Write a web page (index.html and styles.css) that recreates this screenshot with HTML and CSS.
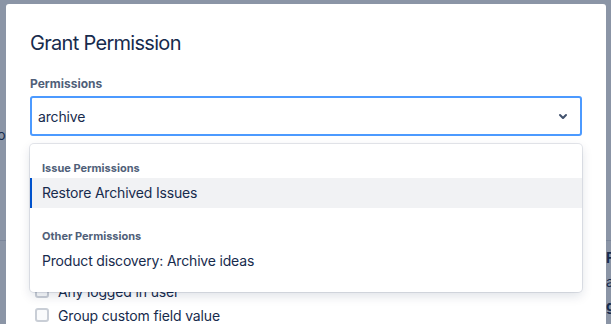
FILE: index.html
```html
<!DOCTYPE html>
<html lang="en">
<head>
    <meta charset="UTF-8">
    <meta name="viewport" content="width=device-width, initial-scale=1.0">
    <title>Grant Permission</title>
    <link rel="stylesheet" href="styles.css">
</head>
<body>
    <!-- page behind the dialog -->
    <div class="page">
        <div class="page-row">
            <span class="page-left">Selector</span>
        </div>
        <hr class="page-rule">
        <div class="page-side">
            <b>Filter</b>
            <span>any</span>
            <b>grant</b>
        </div>
    </div>

    <div class="blanket"></div>

    <div class="modal">
        <h1 class="modal-title">Grant Permission</h1>

        <label class="field-label" for="perm">Permissions</label>
        <div class="select">
            <div class="select-control">
                <input id="perm" class="select-input" type="text" value="archive">
                <span class="select-chevron">
                    <svg width="24" height="24" viewBox="0 0 24 24">
                        <path fill="currentColor" d="M8.292 10.293a1.009 1.009 0 0 0 0 1.419l2.939 2.965c.218.215.5.322.779.322s.556-.107.769-.322l2.93-2.955a1.01 1.01 0 0 0 0-1.419.987.987 0 0 0-1.406 0l-2.298 2.317-2.307-2.327a.99.99 0 0 0-1.406 0z"/>
                    </svg>
                </span>
            </div>

            <div class="menu">
                <div class="menu-group">
                    <div class="menu-heading">Issue Permissions</div>
                    <div class="menu-option is-focused">Restore Archived Issues</div>
                </div>
                <div class="menu-group">
                    <div class="menu-heading">Other Permissions</div>
                    <div class="menu-option">Product discovery: Archive ideas</div>
                </div>
            </div>
        </div>

        <div class="field-label granted">Granted to</div>
        <ul class="grant-list">
            <li><span class="box"></span>Application access</li>
            <li><span class="box"></span>Project lead</li>
            <li><span class="box"></span>Project role</li>
            <li><span class="box"></span>Reporter</li>
            <li><span class="box"></span>Any logged in user</li>
            <li><span class="box"></span>Group custom field value</li>
        </ul>
    </div>
</body>
</html>
```

FILE: styles.css
```css
body {
    margin: 0;
    font-family: Inter, "Noto Sans", sans-serif;
    color: #172b4d;
    background-color: #fff;
    overflow: hidden;
    height: 324px;
}

/* Page behind the blanket */
.page {
    height: 324px;
    font-size: 14px;
}

.page-row {
    padding-top: 126px;
    height: 114px;
    margin-left: -44px;
}

.page-left {
    font-size: 14px;
}

.page-rule {
    margin: 0;
    border: none;
    border-top: 1px solid #dfe1e6;
}

.page-side {
    display: flex;
    flex-direction: column;
    gap: 7px;
    margin-left: 606px;
    padding-top: 8px;
    font-size: 14px;
    line-height: 17px;
}

/* Dialog */
.blanket {
    position: fixed;
    inset: 0;
    background-color: rgba(23, 43, 77, 0.5);
}

.modal {
    position: absolute;
    top: 4px;
    left: 6px;
    width: 600px;
    height: 420px;
    box-sizing: border-box;
    padding: 27px 24px 0;
    background-color: #fff;
    border-radius: 3px;
}

.modal-title {
    margin: 0 0 21px;
    font-size: 20px;
    font-weight: 400;
    line-height: 24px;
    letter-spacing: -0.7px;
    color: #172b4d;
}

.field-label {
    display: block;
    margin-bottom: 4px;
    font-size: 12px;
    font-weight: 700;
    line-height: 16px;
    color: #505f79;
}

.select {
    position: relative;
}

.select-control {
    display: flex;
    align-items: center;
    height: 40px;
    box-sizing: border-box;
    border: 2px solid #4c9aff;
    border-radius: 3px;
    padding: 0 5px 0 6px;
}

.select-input {
    flex: 1;
    border: none;
    outline: none;
    padding: 0;
    font-family: inherit;
    font-size: 14px;
    letter-spacing: -0.15px;
    color: #172b4d;
    background: transparent;
}

.select-chevron {
    display: flex;
    color: #42526e;
}

.menu {
    position: absolute;
    top: calc(100% + 8px);
    left: 0;
    right: 0;
    z-index: 2;
    padding: 4px 0 8px;
    background-color: #fff;
    border-radius: 4px;
    box-shadow: 0 0 0 1px rgba(9, 30, 66, 0.1), 0 4px 11px rgba(9, 30, 66, 0.13);
}

.menu-group {
    padding: 12px 0 8px;
}

.menu-heading {
    padding: 0 12px;
    margin-bottom: 2px;
    font-size: 11px;
    font-weight: 700;
    line-height: 16px;
    color: #505f79;
}

.menu-option {
    padding: 5px 12px;
    font-size: 14px;
    line-height: 20px;
    letter-spacing: -0.18px;
    color: #172b4d;
}

.menu-option.is-focused {
    background-color: #f1f2f4;
    box-shadow: inset 2px 0 0 #0052cc;
}

.granted {
    margin: 16px 0 15px;
}

.grant-list {
    list-style: none;
    margin: 0;
    padding: 0;
}

.grant-list li {
    display: flex;
    align-items: center;
    height: 24px;
    font-size: 14px;
    letter-spacing: -0.15px;
    color: #172b4d;
}

.box {
    width: 14px;
    height: 14px;
    box-sizing: border-box;
    margin: 0 9px 0 5px;
    border: 2px solid #c9ced6;
    border-radius: 3px;
    background-color: #fafbfc;
}
```
